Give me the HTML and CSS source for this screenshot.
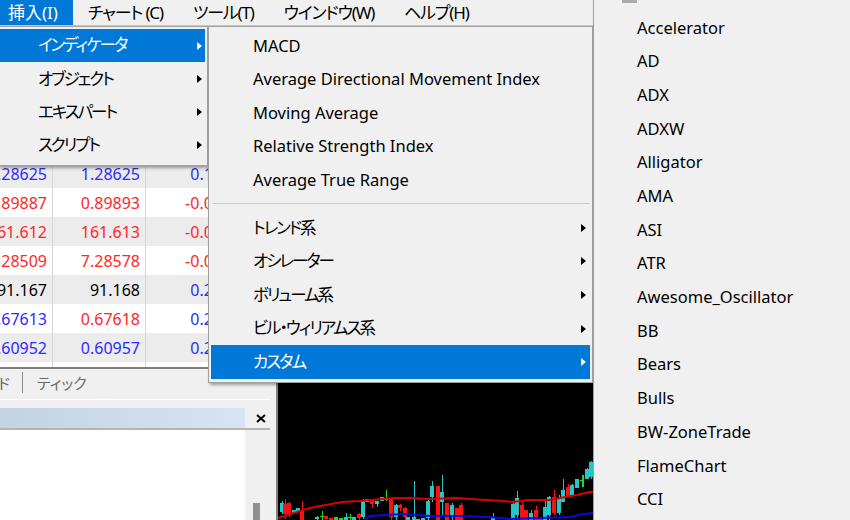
FILE: index.html
```html
<!DOCTYPE html>
<html lang="ja">
<head>
<meta charset="utf-8">
<title>MT</title>
<link rel="stylesheet" href="styles.css">
</head>
<body>
<div class="app">
  <div class="menubar">
    <div class="mb-item active">挿入(I)</div>
    <div class="mb-item">チャート (C)</div>
    <div class="mb-item">ツール(T)</div>
    <div class="mb-item">ウインドウ(W)</div>
    <div class="mb-item">ヘルプ(H)</div>
  </div>
  <div class="workspace">
    <div class="leftpanel">
      <div class="watch">
        <div class="watch-head"></div>
        <div class="row alt"><div class="cell c1 blue"><span>1.08412</span></div><div class="cell c2 blue"><span>1.08414</span></div><div class="cell c3 blue"><span>0.05</span></div></div>
        <div class="row"><div class="cell c1 red"><span>149.812</span></div><div class="cell c2 red"><span>149.815</span></div><div class="cell c3 red"><span>-0.03</span></div></div>
        <div class="row alt"><div class="cell c1 blue"><span>0.88214</span></div><div class="cell c2 blue"><span>0.88219</span></div><div class="cell c3 blue"><span>0.11</span></div></div>
        <div class="row"><div class="cell c1 red"><span>1.36250</span></div><div class="cell c2 red"><span>1.36256</span></div><div class="cell c3 red"><span>-0.04</span></div></div>
        <div class="row alt"><div class="cell c1 blue"><span>1.28625</span></div><div class="cell c2 blue"><span>1.28625</span></div><div class="cell c3 blue"><span>0.12</span></div></div>
        <div class="row"><div class="cell c1 red"><span>0.89887</span></div><div class="cell c2 red"><span>0.89893</span></div><div class="cell c3 red"><span>-0.02</span></div></div>
        <div class="row alt"><div class="cell c1 red"><span>161.612</span></div><div class="cell c2 red"><span>161.613</span></div><div class="cell c3 red"><span>-0.01</span></div></div>
        <div class="row"><div class="cell c1 red"><span>7.28509</span></div><div class="cell c2 red"><span>7.28578</span></div><div class="cell c3 red"><span>-0.05</span></div></div>
        <div class="row alt"><div class="cell c1"><span>91.167</span></div><div class="cell c2"><span>91.168</span></div><div class="cell c3 blue"><span>0.21</span></div></div>
        <div class="row"><div class="cell c1 blue"><span>0.67613</span></div><div class="cell c2 red"><span>0.67618</span></div><div class="cell c3 blue"><span>0.24</span></div></div>
        <div class="row alt"><div class="cell c1 blue"><span>0.60952</span></div><div class="cell c2 blue"><span>0.60957</span></div><div class="cell c3 blue"><span>0.26</span></div></div>
        <div class="row"><div class="cell c1"><span>1.45210</span></div><div class="cell c2"><span>1.45218</span></div><div class="cell c3"><span>0.00</span></div></div>
      </div>
      <div class="tabs">
        <div class="tab-clip"><span>トレード</span></div>
        <div class="tab-sep"></div>
        <div class="tab">ティック</div>
      </div>
      <div class="navigator">
        <div class="nav-title">
          <div class="nav-grad"></div>
          <div class="nav-close"><svg width="10" height="9" viewBox="0 0 10 9"><path d="M1 1 L9 8 M9 1 L1 8" stroke="#000" stroke-width="2" fill="none"/></svg></div>
        </div>
        <div class="nav-body">
          <div class="nav-list"></div>
          <div class="nav-scroll"><div class="thumb"></div></div>
        </div>
      </div>
    </div>
    <div class="splitter"></div>
    <div class="chart">
      <svg class="candles" width="572" height="137" viewBox="0 0 572 137" shape-rendering="crispEdges">
        <g fill="#26c6c6">
          <rect x="4" y="118" width="1" height="13"/><rect x="2" y="120" width="4" height="9"/>
          <rect x="14" y="127" width="4" height="3"/>
          <rect x="18" y="125" width="4" height="4"/>
          <rect x="39" y="133" width="1" height="4"/><rect x="37" y="134" width="4" height="2"/>
          <rect x="68" y="130" width="1" height="7"/><rect x="66" y="134" width="4" height="3"/>
          <rect x="74" y="134" width="4" height="3"/>
          <rect x="85" y="116" width="1" height="20"/><rect x="83" y="117" width="4" height="17"/>
          <rect x="87" y="116" width="4" height="3"/>
          <rect x="99" y="118" width="1" height="6"/><rect x="97" y="118" width="4" height="3"/>
          <rect x="102" y="114" width="4" height="4"/>
          <rect x="118" y="121" width="1" height="16"/><rect x="116" y="122" width="4" height="12"/>
          <rect x="128" y="134" width="4" height="3"/>
          <rect x="136" y="98" width="1" height="39"/><rect x="134" y="134" width="4" height="3"/>
          <rect x="143" y="135" width="4" height="2"/>
          <rect x="150" y="117" width="1" height="20"/><rect x="148" y="118" width="4" height="17"/>
          <rect x="154" y="98" width="1" height="21"/><rect x="152" y="103" width="4" height="11"/>
          <rect x="164" y="92" width="1" height="42"/><rect x="162" y="109" width="4" height="10"/>
          <rect x="174" y="120" width="1" height="17"/><rect x="172" y="122" width="4" height="12"/>
          <rect x="215" y="130" width="1" height="7"/><rect x="213" y="134" width="4" height="3"/>
          <rect x="235" y="118" width="1" height="19"/><rect x="233" y="121" width="4" height="16"/>
          <rect x="239" y="108" width="1" height="29"/><rect x="237" y="115" width="4" height="17"/>
          <rect x="253" y="127" width="1" height="10"/><rect x="251" y="130" width="4" height="7"/>
          <rect x="267" y="117" width="1" height="20"/><rect x="265" y="124" width="4" height="13"/>
          <rect x="271" y="113" width="1" height="24"/><rect x="269" y="114" width="4" height="18"/>
          <rect x="281" y="112" width="1" height="20"/><rect x="279" y="115" width="4" height="15"/>
          <rect x="285" y="96" width="1" height="23"/><rect x="283" y="107" width="4" height="12"/>
          <rect x="294" y="101" width="1" height="12"/><rect x="292" y="102" width="4" height="10"/>
          <rect x="297" y="96" width="4" height="9"/>
          <rect x="309" y="85" width="1" height="11"/><rect x="307" y="86" width="4" height="10"/>
          <rect x="313" y="78" width="1" height="18"/><rect x="311" y="79" width="4" height="15"/>
        </g>
        <g fill="#ff1010">
          <rect x="7" y="116" width="1" height="20"/><rect x="5" y="121" width="4" height="10"/>
          <rect x="11" y="119" width="1" height="15"/><rect x="9" y="120" width="4" height="12"/>
          <rect x="24" y="118" width="1" height="19"/><rect x="22" y="127" width="4" height="10"/>
          <rect x="46" y="133" width="4" height="3"/>
          <rect x="51" y="135" width="4" height="2"/>
          <rect x="81" y="130" width="1" height="7"/><rect x="79" y="131" width="4" height="4"/>
          <rect x="94" y="116" width="1" height="9"/><rect x="92" y="117" width="4" height="4"/>
          <rect x="113" y="115" width="1" height="22"/><rect x="111" y="116" width="4" height="18"/>
          <rect x="122" y="121" width="1" height="7"/><rect x="120" y="122" width="4" height="3"/>
          <rect x="127" y="124" width="1" height="13"/><rect x="125" y="125" width="4" height="9"/>
          <rect x="158" y="103" width="4" height="34"/>
          <rect x="167" y="120" width="4" height="17"/>
          <rect x="177" y="125" width="4" height="12"/>
          <rect x="183" y="120" width="1" height="17"/><rect x="181" y="122" width="4" height="15"/>
          <rect x="244" y="119" width="1" height="18"/><rect x="242" y="122" width="4" height="15"/>
          <rect x="246" y="127" width="4" height="10"/>
          <rect x="258" y="123" width="1" height="14"/><rect x="256" y="127" width="4" height="10"/>
          <rect x="260" y="134" width="4" height="3"/>
          <rect x="276" y="107" width="1" height="25"/><rect x="274" y="114" width="4" height="16"/>
          <rect x="290" y="101" width="1" height="13"/><rect x="288" y="104" width="4" height="10"/>
        </g>
        <g fill="#1fdc1f">
          <rect x="44" y="128" width="1" height="9"/><rect x="42" y="133" width="4" height="1"/>
          <rect x="56" y="134" width="4" height="3"/>
          <rect x="61" y="135" width="4" height="2"/>
          <rect x="72" y="131" width="1" height="6"/><rect x="70" y="134" width="4" height="1"/>
          <rect x="108" y="107" width="1" height="11"/><rect x="106" y="116" width="4" height="1"/>
          <rect x="138" y="136" width="4" height="1"/>
          <rect x="304" y="92" width="2" height="12"/><rect x="302" y="97" width="4" height="1"/>
        </g>
        <polyline points="0,135 3,134 32,125 64,119 82,118 115,115 132,115 152,116 179,115 192,116 225,118 235,119 249,117 272,117 282,115 299,112 312,109 330,108" fill="none" stroke="#d80000" stroke-width="2" shape-rendering="auto"/>
        <polyline points="87,137 92,133 125,131 152,133 179,133 212,134 232,136 292,134 305,131 315,130 330,130" fill="none" stroke="#0a0ae0" stroke-width="2" shape-rendering="auto"/>
      </svg>
    </div>
  </div>

  <div class="menu m1">
    <div class="mi hl"><span class="label ja">インディケータ</span><i class="arrow"></i></div>
    <div class="mi"><span class="label ja">オブジェクト</span><i class="arrow"></i></div>
    <div class="mi"><span class="label ja">エキスパート</span><i class="arrow"></i></div>
    <div class="mi"><span class="label ja">スクリプト</span><i class="arrow"></i></div>
  </div>

  <div class="menu m2">
    <div class="mi"><span class="label">MACD</span></div>
    <div class="mi"><span class="label">Average Directional Movement Index</span></div>
    <div class="mi"><span class="label">Moving Average</span></div>
    <div class="mi"><span class="label">Relative Strength Index</span></div>
    <div class="mi"><span class="label">Average True Range</span></div>
    <div class="sep"></div>
    <div class="mi"><span class="label ja">トレンド系</span><i class="arrow"></i></div>
    <div class="mi"><span class="label ja">オシレーター</span><i class="arrow"></i></div>
    <div class="mi"><span class="label ja">ボリューム系</span><i class="arrow"></i></div>
    <div class="mi"><span class="label ja">ビル・ウィリアムス系</span><i class="arrow"></i></div>
    <div class="mi hl"><span class="label ja">カスタム</span><i class="arrow"></i></div>
  </div>

  <div class="menu m3">
    <div class="m3-cap"><i></i></div>
    <div class="mi"><span class="label">Accelerator</span></div>
    <div class="mi"><span class="label">AD</span></div>
    <div class="mi"><span class="label">ADX</span></div>
    <div class="mi"><span class="label">ADXW</span></div>
    <div class="mi"><span class="label">Alligator</span></div>
    <div class="mi"><span class="label">AMA</span></div>
    <div class="mi"><span class="label">ASI</span></div>
    <div class="mi"><span class="label">ATR</span></div>
    <div class="mi"><span class="label">Awesome_Oscillator</span></div>
    <div class="mi"><span class="label">BB</span></div>
    <div class="mi"><span class="label">Bears</span></div>
    <div class="mi"><span class="label">Bulls</span></div>
    <div class="mi"><span class="label">BW-ZoneTrade</span></div>
    <div class="mi"><span class="label">FlameChart</span></div>
    <div class="mi"><span class="label">CCI</span></div>
    <div class="mi"><span class="label">Chaikin</span></div>
  </div>
</div>
</body>
</html>
```

FILE: styles.css
```css
* { box-sizing: border-box; margin: 0; padding: 0; }
html, body { width: 850px; height: 520px; overflow: hidden; }
body {
  font-family: "Noto Sans", "Noto Sans CJK JP", sans-serif;
  font-feature-settings: "palt";
  background: #f0f0f0;
  color: #000;
}
.app {
  position: relative;
  width: 850px;
  height: 520px;
  overflow: hidden;
  display: flex;
  flex-direction: column;
}

/* menu bar */
.menubar {
  height: 26px;
  flex: none;
  display: flex;
  background: #f0f0f0;
  border-bottom: 1px solid #cccccc;
  margin-left: -7px;
  font-size: 17px;
}
.mb-item {
  padding: 0 15px;
  display: flex;
  align-items: center;
  line-height: 1;
  white-space: nowrap;
  letter-spacing: -1.2px;
}
.mb-item.active { background: #0078d7; color: #fff; letter-spacing: 0; }

/* workspace */
.workspace { flex: 1; display: flex; min-height: 0; }
.leftpanel {
  width: 270px;
  flex: none;
  display: flex;
  flex-direction: column;
  background: #f0f0f0;
  overflow: hidden;
}
.watch {
  height: 343px;
  flex: none;
  background: #fff;
  border-bottom: 2px solid #7d7d7d;
  overflow: hidden;
  font-size: 16px;
}
.watch-head { height: 17px; background: #f0f0f0; }
.row { display: flex; height: 29px; background: #fff; }
.row.alt { background: #ececec; }
.cell {
  height: 100%;
  display: flex;
  align-items: center;
  justify-content: flex-end;
  overflow: hidden;
  white-space: nowrap;
  border-right: 1px solid #d6d6d6;
  line-height: 1;
}
.c1 { width: 53px; padding-right: 5px; }
.c2 { width: 93px; padding-right: 5px; }
.c3 { width: 84px; padding-right: 7px; }
.blue { color: #2b2bff; }
.red { color: #ff2626; }

.tabs {
  height: 31px;
  flex: none;
  display: flex;
  align-items: center;
  padding-bottom: 4px;
  border-bottom: 1px solid #ffffff;
  font-size: 15px;
  color: #6b6b6b;
}
.tab-clip {
  width: 10px;
  display: flex;
  justify-content: flex-end;
  overflow: hidden;
  white-space: nowrap;
}
.tab-sep { width: 1px; height: 21px; background: #8c8c8c; margin: 0 14px 0 12px; }
.tab { white-space: nowrap; }

.navigator { flex: 1; display: flex; flex-direction: column; margin-top: 8px; min-height: 0; }
.nav-title { height: 22px; flex: none; display: flex; border-bottom: 2px solid #b4b4b4; }
.nav-grad { flex: 1; background: linear-gradient(90deg, #c3d3e3, #d7e4f1); }
.nav-close {
  width: 25px;
  display: flex;
  align-items: center;
  justify-content: flex-end;
  padding-right: 4px;
  background: #f0f0f0;
}
.nav-body { flex: 1; display: flex; }
.nav-list { flex: 1; background: #fff; }
.nav-scroll {
  width: 25px;
  background: #f0f0f0;
  display: flex;
  justify-content: center;
  padding: 73px 2px 0 0;
}
.thumb { width: 7px; height: 40px; background: #8f8f8f; }

.splitter { width: 6px; flex: none; background: #f0f0f0; }
.chart {
  flex: 1;
  background: #000;
  border-left: 2px solid #808080;
  display: flex;
  flex-direction: column;
  justify-content: flex-end;
  overflow: hidden;
}
.candles { display: block; flex: none; }

/* popup menus */
.menu {
  position: absolute;
  background: #f0f0f0;
  border: 1px solid #a0a0a0;
  box-shadow: 2px 2px 3px rgba(0, 0, 0, 0.35);
  font-size: 16.5px;
}
.m1 { left: -3px; top: 26px; width: 211px; padding: 2px 0 3px; }
.m2 { left: 208px; top: 26px; width: 385px; padding: 2px 0 3px; }
.m3 { left: 593px; top: -1px; width: 270px; height: 540px; overflow: hidden; }
.mi {
  height: 33.6px;
  margin: 0 2px;
  display: flex;
  align-items: center;
  white-space: nowrap;
  line-height: 1;
}
.m1 .mi { height: 33.25px; padding: 0 3px 0 38px; }
.m2 .mi { padding: 0 4px 0 42px; }
.m3 .mi { height: 33.7px; padding-left: 41px; }
.label { flex: 1; }
.label.ja { letter-spacing: -2px; }
.arrow {
  width: 0;
  height: 0;
  border-left: 5px solid #000;
  border-top: 4.5px solid transparent;
  border-bottom: 4.5px solid transparent;
}
.mi.hl { background: #0078d7; color: #fff; }
.mi.hl .arrow { border-left-color: #fff; }
.sep { height: 1px; background: #c9c9c9; margin: 6.5px 2px 6.5px 4px; }
.m3-cap { height: 11px; }
.m3-cap i { display: block; margin-left: 28px; width: 15px; height: 3px; background: #ababab; }
```
